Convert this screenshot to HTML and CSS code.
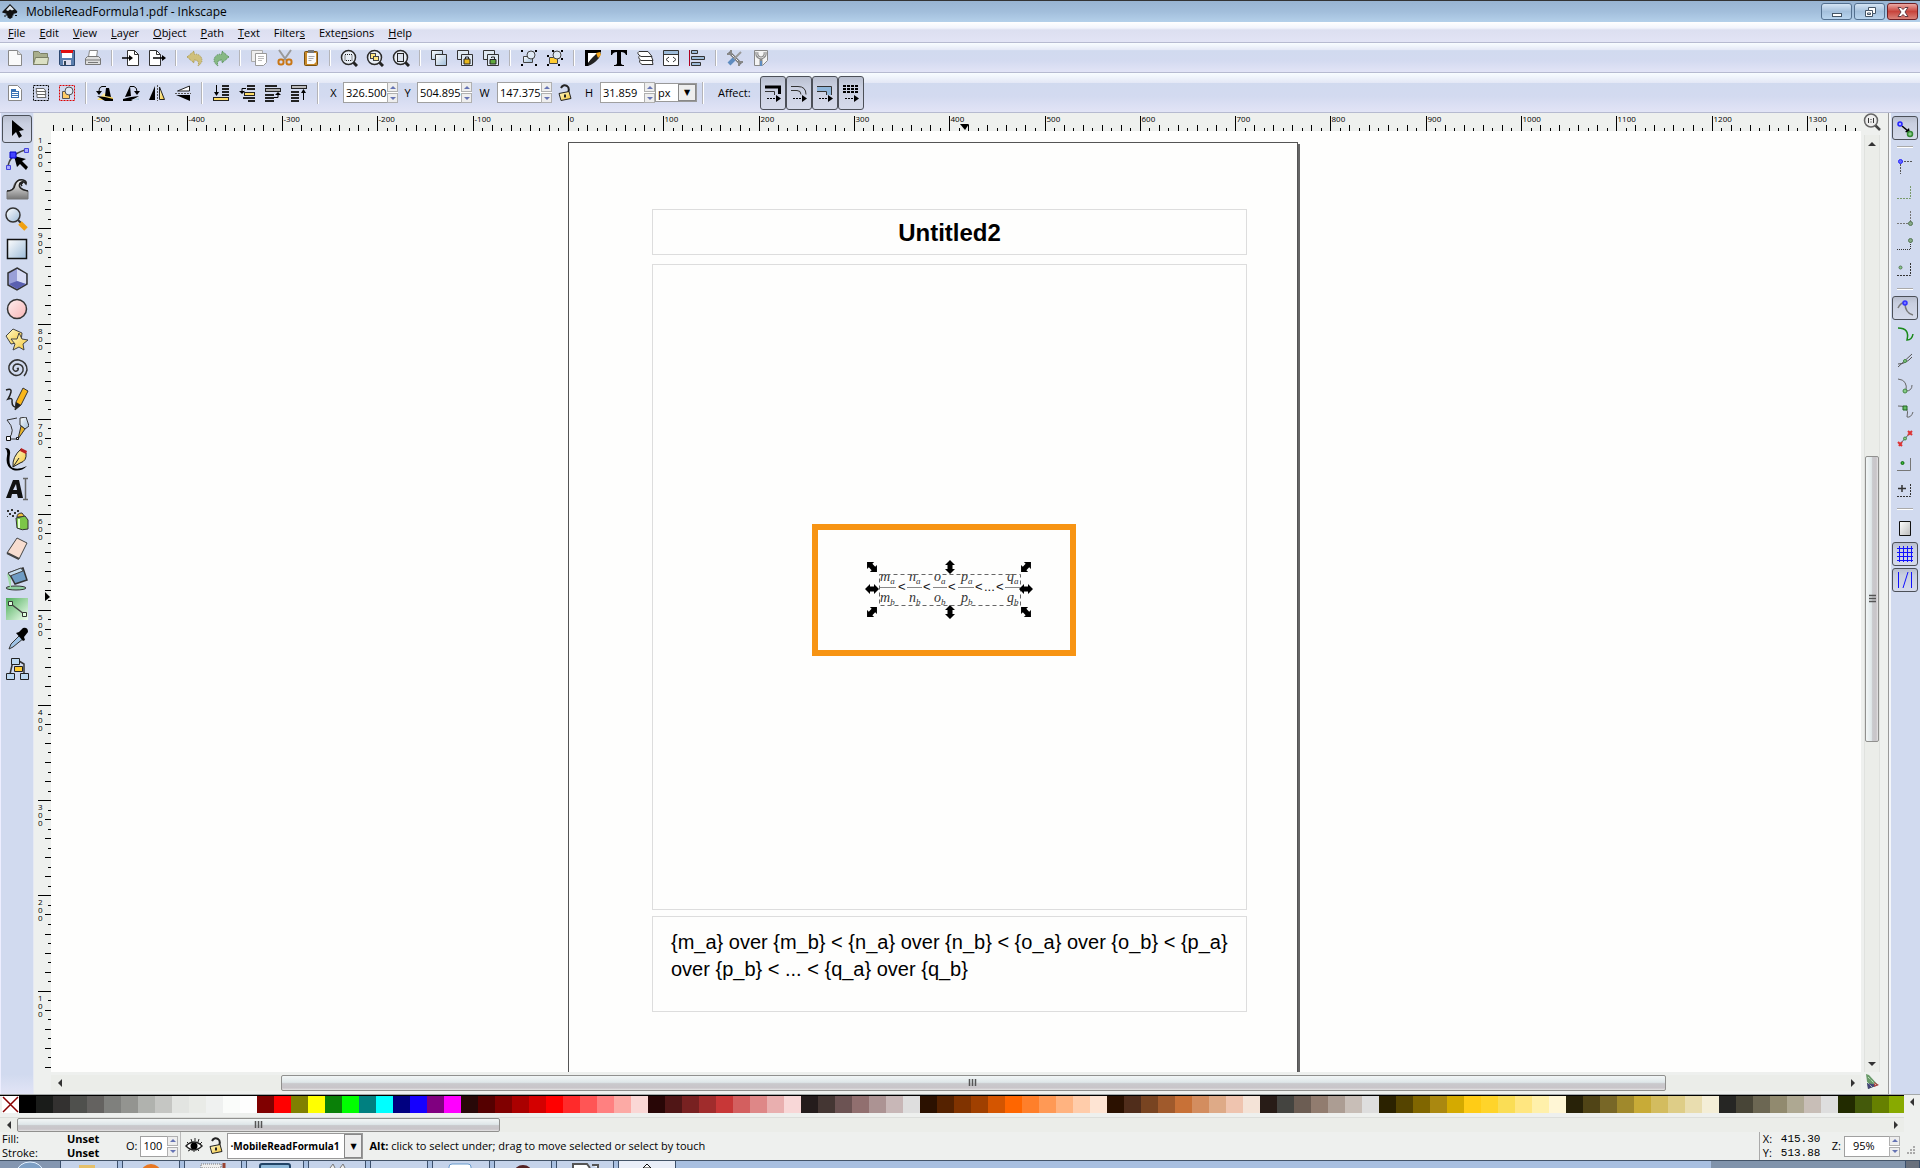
FILE: index.html
```html
<!DOCTYPE html>
<html lang="en">
<head>
<meta charset="utf-8">
<title>MobileReadFormula1.pdf - Inkscape</title>
<link rel="stylesheet" href="styles.css">
</head>
<body>
<svg width="0" height="0" class="defs" aria-hidden="true">
  <defs>
    <linearGradient id="blue" x2="1" y2="1"><stop stop-color="#fff"/><stop offset="1" stop-color="#9dbbd8"/></linearGradient>
    <linearGradient id="gold" x2="1" y2="1"><stop stop-color="#fffbd0"/><stop offset="1" stop-color="#f4c430"/></linearGradient>
    <linearGradient id="pink" x2="1" y2="1"><stop stop-color="#fff0f0"/><stop offset="1" stop-color="#f8b4b4"/></linearGradient>
    <linearGradient id="grey" x2="0" y2="1"><stop stop-color="#fff"/><stop offset="1" stop-color="#777"/></linearGradient>
    <linearGradient id="page" x2="1" y2="1"><stop stop-color="#fff"/><stop offset="1" stop-color="#bbb"/></linearGradient>
    <linearGradient id="green" x2="1" y2="1"><stop stop-color="#4fae5c"/><stop offset="1" stop-color="#f0fff0"/></linearGradient>
    <symbol id="lens" viewBox="0 0 18 18"><path d="M13 13l4 4" stroke="#222" stroke-width="3"/><circle cx="8.500" cy="8.500" r="7" fill="#e8eef6" stroke="#2a2a2a" stroke-width="1.500"/></symbol>
    <symbol id="lock" viewBox="0 0 16 18"><path d="M4 4q2-4 6-2 3 2 1 7" fill="none" stroke="#222" stroke-width="2"/><path d="M2 9.500l10-2 2 7-10 2z" fill="url(#gold)" stroke="#222"/><path d="M8 10.500v3" stroke="#222" stroke-width="2"/></symbol>
    <symbol id="grip" viewBox="0 0 10 8"><path d="M1.500 0v7M4.500 0v7M7.500 0v7" stroke="#555" stroke-width="1.500"/></symbol>
  </defs>
</svg>

<header class="titlebar">
  <svg class="logo" width="16" height="18" viewBox="0 0 16 18"><path d="M8 1l7 7q1 2-2 2.500l-2 .5 1 1-2 1 1 1-3 2-3-2 1-1-3-1 2-1-3-1Q-1 10 1 8z" fill="#111"/><path d="M8 2.500l4 4-2 1-2-1-2 1.500-2-1z" fill="#dde6ee"/><path d="M2 13h2M13 12.500h2" stroke="#111"/></svg>
  <h1>MobileReadFormula1.pdf - Inkscape</h1>
  <div class="winbtns">
    <button aria-label="Minimize"><svg width="14" height="12"><rect x="2.500" y="7.500" width="9" height="3" fill="#fff" stroke="#456"/></svg></button>
    <button aria-label="Restore"><svg width="14" height="12"><path d="M5.500 1.500h7v6h-3v3h-7v-6h3z" fill="#fff" stroke="#456"/><path d="M5.500 4.500h4v3M4.500 7h3v1.500h-3z" fill="none" stroke="#456"/></svg></button>
    <button class="close" aria-label="Close"><svg width="14" height="12"><path d="M2 1.500h3l2 2 2-2h3L9 6l3 4.500H9l-2-2-2 2H2L5 6z" fill="#fff" stroke="#643a42"/></svg></button>
  </div>
</header>

<nav class="menubar">
  <button><u>F</u>ile</button><button><u>E</u>dit</button><button><u>V</u>iew</button><button><u>L</u>ayer</button><button><u>O</u>bject</button><button><u>P</u>ath</button><button><u>T</u>ext</button><button>Filter<u>s</u></button><button>Exte<u>n</u>sions</button><button><u>H</u>elp</button>
</nav>

<div class="toolbar commands" role="toolbar" aria-label="Commands">
  <button aria-label="New"><svg viewBox="0 0 18 18"><path d="M2.500 1.500h9l4 4v11h-13z" fill="#fafafa" stroke="#888"/><path d="M11.500 1.500v4h4" fill="#ddd" stroke="#999"/></svg></button>
  <button aria-label="Open"><svg viewBox="0 0 18 18"><path d="M1.500 15.500v-13h5l2 2h7v11z" fill="#a8ae8c" stroke="#7b8066"/><path d="M1.500 15.500l2-7h13l-1 7z" fill="#dbe0c4" stroke="#7b8066"/></svg></button>
  <button aria-label="Save"><svg viewBox="0 0 18 18"><path d="M1.500 1.500h15v15h-14l-1-1z" fill="#5b7fae" stroke="#2c4770"/><path d="M4 2h10v7H4z" fill="#fff"/><path d="M3 1h12v3H3z" fill="#e01010"/><path d="M5 11h8v5H5z" fill="#dde"/><path d="M6 12h2v4H6z" fill="#345"/></svg></button>
  <button aria-label="Print"><svg viewBox="0 0 18 18"><path d="M4.500 8l1-6.500h8l-1 6.500" fill="#fff" stroke="#888"/><path d="M1.500 9.500l2-2h11l2 2v6h-15z" fill="#ddd" stroke="#777"/><path d="M2 11h14M4 13.500h10" stroke="#777"/></svg></button>
  <i class="sep"></i>
  <button aria-label="Import"><svg viewBox="0 0 18 18"><path d="M5.500 1.500h7l4 4v11h-11z" fill="#fff" stroke="#333"/><path d="M12.500 1.500v4h4" fill="none" stroke="#333"/><path d="M0 9h8" stroke="#000" stroke-width="1.500"/><path d="M7 6l4 3-4 3z"/></svg></button>
  <button aria-label="Export"><svg viewBox="0 0 18 18"><path d="M1.500 1.500h7l4 4v11h-11z" fill="#fff" stroke="#333"/><path d="M8.500 1.500v4h4" fill="none" stroke="#333"/><path d="M5 9h9" stroke="#000" stroke-width="1.500"/><path d="M14 6l4 3-4 3z"/></svg></button>
  <i class="sep"></i>
  <button aria-label="Undo"><svg viewBox="0 0 18 18"><path d="M1 8l7-6v3q8 0 8 7-1 3-4 5 2-6-4-6v3z" fill="#cfc07c" stroke="#a59345" stroke-dasharray="1 1"/></svg></button>
  <button aria-label="Redo"><svg viewBox="0 0 18 18"><path d="M17 8l-7-6v3q-8 0-8 7 1 3 4 5-2-6 4-6v3z" fill="#86b884" stroke="#4d8650" stroke-dasharray="1 1"/></svg></button>
  <i class="sep"></i>
  <button aria-label="Copy"><svg viewBox="0 0 18 18"><path d="M1.500 1.500h11v11h-11z" fill="#eee" stroke="#aaa"/><path d="M5.500 4.500h11v9l-3 3h-8z" fill="#fff" stroke="#999"/><path d="M8 7.500h6M8 9.500h6M8 11.500h4" stroke="#bbb"/></svg></button>
  <button aria-label="Cut"><svg viewBox="0 0 18 18"><path d="M3 1l7 10M15 1L8 11" stroke="#999" stroke-width="2"/><rect x="2.500" y="10.500" width="5" height="5" rx="2" fill="none" stroke="#c97614" stroke-width="2"/><rect x="10.500" y="10.500" width="5" height="5" rx="2" fill="none" stroke="#c97614" stroke-width="2"/></svg></button>
  <button aria-label="Paste"><svg viewBox="0 0 18 18"><rect x="2.500" y="2.500" width="13" height="14" rx="1" fill="#c98a2b" stroke="#77500f"/><path d="M5 4h9v9l-2 2H5z" fill="#fafafa"/><path d="M6 1h6v3H6z" fill="#777"/><path d="M6.500 7.500h6M6.500 9.500h5M6.500 11.500h3" stroke="#aaa"/></svg></button>
  <i class="sep"></i>
  <button aria-label="Zoom selection"><svg viewBox="0 0 18 18"><use href="#lens"/><rect x="5" y="5.500" width="7" height="6" fill="none" stroke="#222" stroke-dasharray="1 1"/></svg></button>
  <button aria-label="Zoom drawing"><svg viewBox="0 0 18 18"><use href="#lens"/><rect x="4.500" y="4.500" width="5" height="5" fill="#ffe680" stroke="#444"/><rect x="7.500" y="7.500" width="5" height="4" fill="#ffe680" stroke="#444"/></svg></button>
  <button aria-label="Zoom page"><svg viewBox="0 0 18 18"><use href="#lens"/><rect x="5.500" y="4.500" width="6" height="8" fill="#dde4ee" stroke="#222"/></svg></button>
  <i class="sep"></i>
  <button aria-label="Duplicate"><svg viewBox="0 0 18 18"><path d="M1.500 1.500h11v9h-11z" fill="url(#blue)" stroke="#333"/><path d="M5.500 5.500h11v11h-11z" fill="url(#blue)" stroke="#333"/></svg></button>
  <button aria-label="Clone"><svg viewBox="0 0 18 18"><path d="M1.500 1.500h11v9h-11z" fill="#dfe9f2" stroke="#333"/><path d="M5.500 5.500h11v11h-11z" fill="#dfe9f2" stroke="#333"/><path d="M8 10h6v5H8z" fill="#e8b81c" stroke="#222"/><path d="M9.500 10V8h3v2" fill="none" stroke="#222"/></svg></button>
  <button aria-label="Unlink clone"><svg viewBox="0 0 18 18"><path d="M1.500 1.500h11v9h-11z" fill="#dfe9f2" stroke="#333"/><path d="M5.500 5.500h11v11h-11z" fill="#dfe9f2" stroke="#333"/><path d="M8 10.500h6V15H8z" fill="#5fa83c" stroke="#222"/><path d="M9.500 9V8h3v2" fill="none" stroke="#222"/></svg></button>
  <i class="sep"></i>
  <button aria-label="Group"><svg viewBox="0 0 18 18"><path d="M3.500 7.500h9v6h-9z" fill="url(#blue)" stroke="#444"/><circle cx="11" cy="6" r="4" fill="#dfe9f4" stroke="#444"/><path d="M1 1h2v2H1zM15 1h2v2h-2zM1 15h2v2H1zM15 15h2v2h-2z"/></svg></button>
  <button aria-label="Ungroup"><svg viewBox="0 0 18 18"><path d="M3.500 8.500h8v6h-8z" fill="#fc3" stroke="#444"/><circle cx="11" cy="6" r="4" fill="#dfe9f4" stroke="#444"/><path d="M1 6h2v2H1zM6 1h2v2H6zM15 1h2v2h-2zM1 15h2v2H1zM12 15h2v2h-2zM15 9h2v2h-2z"/></svg></button>
  <i class="sep"></i>
  <button aria-label="Fill and stroke"><svg viewBox="0 0 18 18"><path d="M1 1h16v2L4 17H1z"/><path d="M4 4h9L4 14z" fill="#fff"/><path d="M4 17q0-6 9-12l4-1-2 5q-5 6-11 8z" fill="#222"/><path d="M12 4l4-1 1 3-3 3z" fill="#f4a71d"/></svg></button>
  <button aria-label="Text and font"><svg viewBox="0 0 18 18"><path d="M1 1h16v5h-1q-1-3-5-3v11q0 2 3 2v1H4v-1q3 0 3-2V3Q3 3 2 6H1z"/></svg></button>
  <button aria-label="Layers"><svg viewBox="0 0 18 18"><g fill="#fff" stroke="#333"><path d="M6 10.500h10l1 5H6q-4-2-2-5z"/><path d="M5 6.500h10l2 5H5q-4-3-1-5z"/><path d="M3 2.500h9l4 5H5q-5-3-2-5z"/></g></svg></button>
  <button aria-label="XML editor"><svg viewBox="0 0 18 18"><path d="M1.500 1.500h15v15h-15z" fill="#fff" stroke="#333"/><path d="M2 2h14v3H2z" fill="#9dbbd8"/><path d="M2 5.500h14M7 8l-3 2.500L7 13M11 8l3 2.500-3 2.500" fill="none" stroke="#333"/></svg></button>
  <button aria-label="Align"><svg viewBox="0 0 18 18"><path d="M1.500 1v16" stroke="#b00020"/><g fill="#9dbbd8" stroke="#333"><path d="M3.500 1.500h6v3h-6zM3.500 7.500h13v3h-13zM3.500 13.500h9v3h-9z"/></g></svg></button>
  <i class="sep"></i>
  <button aria-label="Preferences"><svg viewBox="0 0 18 18"><path d="M3 3l12 12" stroke="#777" stroke-width="3"/><path d="M4 4l10 10" stroke="#eee"/><path d="M15 3L8 10" stroke="#999" stroke-width="2"/><path d="M8 10l-5 5" stroke="#5f8cc0" stroke-width="4"/><path d="M5 1v4H1M13 17v-4h4" fill="none" stroke="#888" stroke-width="2"/></svg></button>
  <button aria-label="Document properties"><svg viewBox="0 0 18 18"><path d="M2.500 1.500h13v10l-5 5h-8z" fill="#f4f4f4" stroke="#888"/><path d="M5 3q-1 5 4 6 5-1 4-6M9 9v7" fill="none" stroke="#888" stroke-width="3"/><path d="M5 3q-1 5 4 6 5-1 4-6" fill="none" stroke="#ddd"/><path d="M9 12v5" stroke="#5f8cc0" stroke-width="2"/></svg></button>
</div>

<div class="toolbar controls" role="toolbar" aria-label="Tool controls">
  <button aria-label="Select all"><svg viewBox="0 0 18 18"><path d="M2.500 1.500h9l4 4v11h-13z" fill="#fff" stroke="#888"/><path d="M5 5h5v2h3v7H5z" fill="#3b73b5"/><path d="M6 8.500h6M6 10.500h6M6 12.500h6" stroke="#fff"/></svg></button>
  <button aria-label="Select all in layers"><svg viewBox="0 0 18 18"><rect x="1.500" y="1.500" width="15" height="15" fill="none" stroke="#000" stroke-dasharray="2 1"/><g fill="#fff" stroke="#666"><path d="M5 10.500h8l1 3H5z"/><path d="M4 7.500h9l1 3H5z"/><path d="M4 4.500h8l2 3H5z"/></g></svg></button>
  <button aria-label="Deselect"><svg viewBox="0 0 18 18"><rect x="1.500" y="1.500" width="15" height="15" fill="none" stroke="#d00" stroke-dasharray="2 1"/><path d="M4.500 7.500h7v7h-7z" fill="#fc6" stroke="#555"/><circle cx="11" cy="7" r="4" fill="#dfe9f4" stroke="#555"/></svg></button>
  <i class="sep"></i>
  <button aria-label="Rotate left"><svg viewBox="0 0 18 18"><path d="M8 9l9 5v2H1z" fill="url(#gold)"/><path d="M1 12l8 1 8 2v2H9z"/><path d="M10 4h3l2 9-6-1z"/><path d="M10 2.500H6Q3 3 3 8" fill="none" stroke="#000"/><path d="M0 7h6l-3 4z"/></svg></button>
  <button aria-label="Rotate right"><svg viewBox="0 0 18 18"><path d="M17 12l-8 1-8 2v2h8z"/><path d="M8 2L3 13l6-1z"/><path d="M9 16l8-3v3z" fill="url(#blue)"/><path d="M8 2.500h4q3 1 3 5" fill="none" stroke="#000"/><path d="M18 7h-6l3 4z"/></svg></button>
  <button aria-label="Flip horizontal"><svg viewBox="0 0 18 18"><path d="M7 2v14H1z"/><path d="M11.500 3v12.500h5z" fill="url(#gold)" stroke="#222"/><path d="M9.500 1v16" stroke="#555" stroke-dasharray="2 1"/></svg></button>
  <button aria-label="Flip vertical"><svg viewBox="0 0 18 18"><path d="M16 11v6L2 11z"/><path d="M15.500 2v5h-12z" fill="#fff" stroke="#222"/><path d="M1 9.500h16" stroke="#555" stroke-dasharray="2 1"/></svg></button>
  <i class="sep"></i>
  <button aria-label="Lower to bottom"><svg viewBox="0 0 18 18"><path d="M10 2h7M10 5h7M10 8h7M10 11h7" stroke="#222" stroke-width="2"/><rect x="1.500" y="13.500" width="15" height="3" fill="#fd6" stroke="#222"/><path d="M4.500 1v8" stroke="#000"/><path d="M2 8h5l-2.500 4z"/></svg></button>
  <button aria-label="Lower"><svg viewBox="0 0 18 18"><path d="M9 2h8M9 5h8M5 14h12M10 17h7" stroke="#222" stroke-width="2"/><rect x="6.500" y="8.500" width="10" height="3" fill="#fd6" stroke="#222"/><path d="M8 4.500H4v3" fill="none" stroke="#000"/><path d="M1 7h6l-3 3z"/></svg></button>
  <button aria-label="Raise"><svg viewBox="0 0 18 18"><path d="M1 2h12M1 11h9M1 14h9M1 17h9" stroke="#222" stroke-width="2"/><rect x="1.500" y="4.500" width="15" height="3" fill="#aaa" stroke="#222"/><path d="M10 13.500h4v-3" fill="none" stroke="#000"/><path d="M11 11h6l-3-3z"/></svg></button>
  <button aria-label="Raise to top"><svg viewBox="0 0 18 18"><path d="M1 8h8M1 11h8M1 14h8M1 17h8" stroke="#222" stroke-width="2"/><rect x="1.500" y="1.500" width="15" height="3" fill="#bbb" stroke="#222"/><path d="M13.500 8v8" stroke="#000"/><path d="M11 9h5l-2.500-4z"/></svg></button>
  <i class="sep"></i>
  <label for="fx">X</label>
  <span class="spin"><input id="fx" value="326.500"><span><button aria-label="Increase X"></button><button aria-label="Decrease X"></button></span></span>
  <label for="fy">Y</label>
  <span class="spin"><input id="fy" value="504.895"><span><button aria-label="Increase Y"></button><button aria-label="Decrease Y"></button></span></span>
  <label for="fw">W</label>
  <span class="spin"><input id="fw" value="147.375"><span><button aria-label="Increase width"></button><button aria-label="Decrease width"></button></span></span>
  <button aria-label="Lock ratio"><svg viewBox="0 0 16 18"><use href="#lock"/></svg></button>
  <label for="fh">H</label>
  <span class="spin"><input id="fh" value="31.859"><span><button aria-label="Increase height"></button><button aria-label="Decrease height"></button></span></span>
  <span class="combo unit"><select aria-label="Unit"><option>px</option></select></span>
  <i class="sep"></i>
  <span class="affect">Affect:</span>
  <div class="toggles">
    <button class="on" aria-label="Scale stroke width"><svg viewBox="0 0 18 18"><path d="M1 3h14.500v7" fill="none" stroke="#000" stroke-width="3"/><path d="M1 7.500h9.500V11" fill="none" stroke="#333"/><path d="M3 14.500h9" stroke="#000" stroke-dasharray="2 1"/><path d="M12 11l5 3.500-5 3.500z"/></svg></button>
    <button class="on" aria-label="Scale corners"><svg viewBox="0 0 18 18"><path d="M1 2.500h7q8 0 8 8M1 6.500h6q4 0 4 4" fill="none" stroke="#333"/><path d="M3 14.500h9" stroke="#000" stroke-dasharray="2 1"/><path d="M12 11l5 3.500-5 3.500z"/></svg></button>
    <button class="on" aria-label="Move gradients"><svg viewBox="0 0 18 18"><path d="M1 3h14v8h-4V7H1z" fill="#8fb6da"/><path d="M1 2.500h14.500V11M1 7.500h9.500V11" fill="none" stroke="#333"/><path d="M3 14.500h9" stroke="#000" stroke-dasharray="2 1"/><path d="M12 11l5 3.500-5 3.500z"/></svg></button>
    <button class="on" aria-label="Move patterns"><svg viewBox="0 0 18 18"><path d="M1 2h16M1 5h16M1 8h16" stroke="#000" stroke-width="2" stroke-dasharray="3 1"/><path d="M3 14.500h9" stroke="#000" stroke-dasharray="2 1"/><path d="M12 11l5 3.500-5 3.500z"/></svg></button>
  </div>
</div>

<main class="workspace">
  <div class="toolbox" role="toolbar" aria-label="Tools">
    <button class="on" aria-label="Selector"><svg viewBox="0 0 24 24"><path d="M7 3v16l4-4 3 6 3-2-3-5 5-1z"/></svg></button>
    <button aria-label="Node"><svg viewBox="0 0 24 24"><path d="M3 20Q4 8 20 3" fill="none" stroke="#444" stroke-width="1.500"/><path d="M9 9l3 11 3-3 6 6 2-3-6-6 4-2z"/><path d="M5 5h6v6H5z" fill="#44f" stroke="#00c"/><path d="M1.500 18.500h4v4h-4zM19.500 1.500h4v4h-4z" fill="#aaf" stroke="#44d"/></svg></button>
    <button aria-label="Tweak"><svg viewBox="0 0 24 24"><path d="M2 22v-8q6 0 7-6 2-6 9-5 4 1 3 4-3-4-6-1-2 6 8 8v8z" fill="url(#grey)" stroke="#777"/><path d="M2 14q7 0 8-6 2-6 8-5 4 1 3 4-3-4-6-1-3 6 8 8M17 9q-2-3 1-3" fill="none" stroke="#222" stroke-width="1.500"/></svg></button>
    <button aria-label="Zoom"><svg viewBox="0 0 24 24"><path d="M13 13l4 4" stroke="#333" stroke-width="2"/><path d="M15 16l6 6" stroke="#f0a010" stroke-width="5"/><circle cx="8" cy="8" r="7" fill="url(#blue)" stroke="#333" stroke-width="1.500"/></svg></button>
    <button aria-label="Rectangle"><svg viewBox="0 0 24 24"><path d="M2.500 2.500h19v19h-19z" fill="url(#blue)" stroke="#111" stroke-width="1.500"/></svg></button>
    <button aria-label="3D box"><svg viewBox="0 0 24 24"><path d="M12 1l10 6v10l-10 6-9-5V6z" fill="#9aa0d8" stroke="#333" stroke-width="1.500"/><path d="M12 2v12l9 3V7z" fill="#d8dcf4"/><path d="M4 17l8-3 9 3-9 5z" fill="#5a60b0"/></svg></button>
    <button aria-label="Ellipse"><svg viewBox="0 0 24 24"><circle cx="12" cy="12" r="9.500" fill="url(#pink)" stroke="#333" stroke-width="1.500"/></svg></button>
    <button aria-label="Star"><svg viewBox="0 0 24 24"><path d="M8 2l9 4-1 9-10 2-5-8z" fill="url(#gold)" stroke="#444"/><path d="M14 6l3 6 6 1-5 4 1 6-5-3-6 3 2-6-4-5h6z" fill="url(#gold)" stroke="#444"/></svg></button>
    <button aria-label="Spiral"><svg viewBox="0 0 24 24"><path d="M12 12q2-2 1 1-3 3-5-1 0-5 5-5 6 1 5 7-3 6-9 4-6-3-5-9 3-7 10-6 8 2 8 10-1 4-3 6" fill="none" stroke="#333" stroke-width="1.500"/></svg></button>
    <button aria-label="Pencil"><svg viewBox="0 0 24 24"><path d="M1 3q6-2 5 2t-3 7q5-2 4 3 0 6 6 5" fill="none" stroke="#222" stroke-width="1.500"/><path d="M18 1l5 3-7 14-6 5 1-8z" fill="#f9b61c" stroke="#333"/><path d="M11 15l5 3-6 5z" fill="#222"/></svg></button>
    <button aria-label="Bezier"><svg viewBox="0 0 24 24"><path d="M3 22h10M3 22Q12 14 2 3l10-2" fill="none" stroke="#333"/><path d="M15 1l6-1 3 9-4 3-5-4z" fill="url(#blue)" stroke="#333"/><path d="M16 9l4 3-7 10z" fill="#eab52c" stroke="#333"/><path d="M1.500 19.500h4v4h-4zM11.500 20.500h2v2h-2z" fill="#fff" stroke="#111"/></svg></button>
    <button aria-label="Calligraphy"><svg viewBox="0 0 24 24"><path d="M0 1q6 0 5 6-2 12 3 14 6 2 14-2-6 6-14 4Q0 20 2 9q1-6-2-8z"/><path d="M16 2l5 4q1 8-6 10l-7 4q-1-10 8-18z" fill="url(#gold)" stroke="#222"/><path d="M8 20l6-9" stroke="#222"/><path d="M16 1l6 3-1 3-6-3z" fill="#b22"/></svg></button>
    <button aria-label="Text"><svg viewBox="0 0 24 24"><path d="M1 21L8 3h6l4 18h-5l-1-4H7l-1 4zM8 13h4l-1-6z" fill="#111" fill-rule="evenodd"/><path d="M18 1.500h5M18 22.500h5M20.500 2v20" stroke="#666" stroke-width="1.500"/></svg></button>
    <button aria-label="Spray"><svg viewBox="0 0 24 24"><path d="M2 3h2v2H2zM6 2h2v2H6zM4 6h2v2H4zM9 5h2v2H9zM7 8h2v2H7zM2 9h1v1H2zM12 3h2v2h-2z" fill="#333"/><path d="M12 10q0-4 5-4l3 4z" fill="#f0c040" stroke="#333"/><path d="M11 11l9-2 3 4v9q-6 2-11-1z" fill="#7cc648" stroke="#333"/><path d="M14 12v9" stroke="#e4ffd0" stroke-width="2"/></svg></button>
    <button aria-label="Eraser"><svg viewBox="0 0 24 24"><path d="M12 1l10 5-8 16-12-6z" fill="#f8ddd0" stroke="#444"/><path d="M2 16l12 6" stroke="#444" stroke-width="2"/></svg></button>
    <button aria-label="Paint bucket"><svg viewBox="0 0 24 24"><ellipse cx="11" cy="21" rx="10" ry="2" fill="#8ed0a0" stroke="#333"/><path d="M2 7h4v14H5z" fill="#a0dca8"/><path d="M4 6l14-5 4 12-12 4z" fill="#6f9cc4" stroke="#333" stroke-width="1.500"/><path d="M3 6l13-5 2 3-13 5z" fill="#c8dff0" stroke="#444"/></svg></button>
    <button aria-label="Gradient"><svg viewBox="0 0 24 24"><path d="M1 1h22v22H1z" fill="url(#green)"/><path d="M6 7l13 10" stroke="#444" stroke-width="1.500"/><path d="M3.500 4.500h4v4h-4zM17.500 15.500h4v4h-4z" fill="#dfd" stroke="#333"/></svg></button>
    <button aria-label="Dropper"><svg viewBox="0 0 24 24"><path d="M15 8l4 3L8 20l-4 2 2-5z" fill="#9fc3e6" stroke="#333"/><path d="M11 6l3-1 4-4q5-1 5 4l-4 5 1 3-2 1z"/></svg></button>
    <button aria-label="Connector"><svg viewBox="0 0 24 24"><path d="M8 4L5 17M14 4l5 3v10" fill="none" stroke="#333" stroke-width="1.500"/><g fill="#bcd8f0" stroke="#222"><path d="M6.500 1.500h8v6h-8zM1.500 16.500h8v6h-8zM15.500 16.500h8v6h-8z"/><path d="M9.500 9.500h8v5h-8z" fill="#fc3"/></g></svg></button>
  </div>

  <div class="editor">
    <svg class="hruler" id="hruler" aria-label="Horizontal ruler"></svg>
    <button class="zoom11" aria-label="Sticky zoom"><svg width="18" height="18" viewBox="0 0 18 18"><path d="M12 12l5 5" stroke="#444" stroke-width="2.500"/><circle cx="8" cy="7.500" r="6.500" fill="#eee" stroke="#666" stroke-width="1.500"/><path d="M5.500 5v5M10.500 5v5M8 6v1M8 8.500v1" stroke="#333"/></svg></button>
    <svg class="vruler" id="vruler" aria-label="Vertical ruler"></svg>
    <div class="canvas">
      <article class="page">
        <h2 class="frame heading">Untitled2</h2>
        <div class="frame body-frame"></div>
        <p class="frame formula-source">{m_a} over {m_b} &lt; {n_a} over {n_b} &lt; {o_a} over {o_b} &lt; {p_a} over {p_b} &lt; ... &lt; {q_a} over {q_b}</p>
        <svg class="formula" viewBox="0 0 264 132">
          <defs>
            <path id="arrow" d="M0-7L5-2H2.500V2H5L0 7-5 2H-2.500V-2H-5z"/>
          </defs>
          <rect x="3" y="3" width="258" height="126" fill="none" stroke="#f79413" stroke-width="6"/>
          <g class="var">
            <text x="68" y="57">m<tspan dy="3" class="sub">a</tspan></text><text x="68" y="78">m<tspan dy="3" class="sub">b</tspan></text>
            <text x="97" y="57">n<tspan dy="3" class="sub">a</tspan></text><text x="97" y="78">n<tspan dy="3" class="sub">b</tspan></text>
            <text x="122" y="57">o<tspan dy="3" class="sub">a</tspan></text><text x="122" y="78">o<tspan dy="3" class="sub">b</tspan></text>
            <text x="149" y="57">p<tspan dy="3" class="sub">a</tspan></text><text x="149" y="78">p<tspan dy="3" class="sub">b</tspan></text>
            <text x="195" y="57">q<tspan dy="3" class="sub">a</tspan></text><text x="195" y="78">q<tspan dy="3" class="sub">b</tspan></text>
          </g>
          <g class="rel"><text x="86" y="67">&lt;</text><text x="111" y="67">&lt;</text><text x="136" y="67">&lt;</text><text x="163" y="67">&lt;</text><text x="172" y="67">...</text><text x="184" y="67">&lt;</text></g>
          <path d="M67 63.500h17M95 63.500h15M121 63.500h14M146 63.500h16M193 63.500h15" stroke="#888"/>
          <rect x="67.500" y="50.500" width="141" height="31" fill="none" stroke="#666" stroke-dasharray="4 3"/>
          <use href="#arrow" x="138" y="43"/><use href="#arrow" x="138" y="88"/>
          <use href="#arrow" transform="translate(60 65) rotate(90)"/><use href="#arrow" transform="translate(214 65) rotate(90)"/>
          <use href="#arrow" transform="translate(60 43) rotate(-45)"/><use href="#arrow" transform="translate(214 43) rotate(45)"/>
          <use href="#arrow" transform="translate(60 88) rotate(45)"/><use href="#arrow" transform="translate(214 88) rotate(-45)"/>
        </svg>
      </article>
    </div>
    <div class="scroll vertical">
      <button aria-label="Scroll up"><i class="tri up"></i></button>
      <i class="before"></i><div class="thumb"><svg width="10" height="8"><use href="#grip"/></svg></div><i class="after"></i>
      <button aria-label="Scroll down"><i class="tri down"></i></button>
    </div>
    <div class="scroll horizontal">
      <button aria-label="Scroll left"><i class="tri left"></i></button>
      <i class="before"></i><div class="thumb"><svg width="10" height="8"><use href="#grip"/></svg></div><i class="after"></i>
      <button aria-label="Scroll right"><i class="tri right"></i></button>
    </div>
    <button class="cms" aria-label="Color management"><svg width="16" height="16" viewBox="0 0 16 16"><path d="M2 0l3 1 9 10-10 4z" fill="#6a9a6a"/><path d="M3 9l11 2-10 4z" fill="#447"/><path d="M10 8l5 3-5 2z" fill="#a44"/><path d="M4 3l8 8M3 8l5 5" stroke="#dfd" stroke-dasharray="1 1"/></svg></button>
  </div>

  <div class="snapbar" role="toolbar" aria-label="Snap controls">
    <button class="on" aria-label="Enable snapping"><svg viewBox="0 0 20 20"><path d="M7 8l6 5" stroke="#000" stroke-width="1.500"/><path d="M15 15l-5-1 4-4z"/><circle cx="5" cy="6" r="2" fill="#aaf" stroke="#22f" stroke-width="1.500"/><circle cx="15" cy="16" r="2.500" fill="#8c8" stroke="#383" stroke-width="1.500"/></svg></button>
    <i class="hsep"></i>
    <button aria-label="Snap bounding box"><svg viewBox="0 0 20 20"><path d="M5.500 5v13M6 5.500h12" stroke="#555" stroke-dasharray="2 1"/><circle cx="5.500" cy="5.500" r="2" fill="#66f" stroke="#22f"/></svg></button>
    <button aria-label="Snap bounding box edges"><svg viewBox="0 0 20 20"><path d="M2 16.500h13.500V3" fill="none" stroke="#7a9a6a" stroke-dasharray="2 1"/></svg></button>
    <button aria-label="Snap bounding box corners"><svg viewBox="0 0 20 20"><path d="M2 15.500h13.500V2" fill="none" stroke="#777" stroke-dasharray="2 1"/><circle cx="15.500" cy="15.500" r="2" fill="#8a8" stroke="#575"/></svg></button>
    <button aria-label="Snap edge midpoints"><svg viewBox="0 0 20 20"><path d="M2 15.500h13.500V8" fill="none" stroke="#333" stroke-dasharray="1 1"/><circle cx="15.500" cy="6.500" r="2" fill="#8a8" stroke="#575"/></svg></button>
    <button aria-label="Snap box centers"><svg viewBox="0 0 20 20"><path d="M2 15.500h13.500V3" fill="none" stroke="#333" stroke-dasharray="2 1"/><circle cx="5.500" cy="7.500" r="1.500" fill="#8c8" stroke="#575"/></svg></button>
    <i class="hsep"></i>
    <button class="on" aria-label="Snap nodes"><svg viewBox="0 0 20 20"><path d="M3 10q3-6 7-5 0 10 8 12" fill="none" stroke="#777" stroke-width="1.500"/><circle cx="10" cy="5" r="2" fill="#77f" stroke="#33f" stroke-width="1.500"/></svg></button>
    <button aria-label="Snap to paths"><svg viewBox="0 0 20 20"><path d="M3 4q12 0 9 12 5 0 6-6" fill="none" stroke="#1a8a1a" stroke-width="1.500"/></svg></button>
    <button aria-label="Snap to intersections"><svg viewBox="0 0 20 20"><path d="M3 17L17 4M3 14q8 0 14-7" fill="none" stroke="#555"/><circle cx="10" cy="11" r="1.500" fill="#8c8" stroke="#484"/></svg></button>
    <button aria-label="Snap to cusp nodes"><svg viewBox="0 0 20 20"><path d="M3 3q10 1 8 12 6 0 6-6" fill="none" stroke="#666"/><circle cx="10" cy="15" r="2" fill="#8c8" stroke="#484"/></svg></button>
    <button aria-label="Snap to smooth nodes"><svg viewBox="0 0 20 20"><path d="M3 4q12-1 9 11 4 1 6-5" fill="none" stroke="#666"/><path d="M8 4h4v4H8z" fill="#6b6" stroke="#262"/></svg></button>
    <button aria-label="Snap line midpoints"><svg viewBox="0 0 20 20"><path d="M4 17L16 4" stroke="#555"/><path d="M3 14l4 4M7 14l-3 4M13 3l4 4M17 3l-4 4" stroke="#d33" stroke-width="2"/><circle cx="10" cy="10.500" r="1.500" fill="#8c8" stroke="#484"/></svg></button>
    <button aria-label="Snap object centers"><svg viewBox="0 0 20 20"><path d="M2 16.500h13.500V4" fill="none" stroke="#777"/><circle cx="7.500" cy="9" r="1.500" fill="#3b3" stroke="#161"/></svg></button>
    <button aria-label="Snap rotation centers"><svg viewBox="0 0 20 20"><path d="M2 16.500h13.500V3" fill="none" stroke="#333" stroke-dasharray="2 1"/><path d="M3 8.500h8M7 5v7" stroke="#333" stroke-width="1.500"/></svg></button>
    <i class="hsep"></i>
    <button aria-label="Snap to page border"><svg viewBox="0 0 20 20"><path d="M4.500 3.500h11v14h-11z" fill="url(#page)" stroke="#111"/></svg></button>
    <button class="on" aria-label="Snap to grid"><svg viewBox="0 0 20 20"><path d="M4.500 2v16M8.500 2v16M12.500 2v16M16.500 2v16M2 4.500h16M2 8.500h16M2 12.500h16M2 16.500h16" stroke="#11f"/></svg></button>
    <button class="on" aria-label="Snap to guides"><svg viewBox="0 0 20 20"><path d="M3.500 2v16M16.500 2v16M8 18l5-16" stroke="#11f"/></svg></button>
  </div>
</main>

<section class="palette" aria-label="Palette">
  <div class="swatches" id="swatches">
    <button class="none" aria-label="None"><svg width="17" height="17"><path d="M1 1l15 15M16 1L1 16" stroke="#800" stroke-width="1.500"/></svg></button>
  </div>
  <button class="palmenu" aria-label="Palette menu"><i class="tri left"></i></button>
  <div class="scroll horizontal pal">
    <button aria-label="Scroll left"><i class="tri left"></i></button>
    <div class="thumb"><svg width="10" height="8"><use href="#grip"/></svg></div><i class="after"></i>
    <button aria-label="Scroll right"><i class="tri right"></i></button>
  </div>
</section>

<footer class="status">
  <dl class="style"><dt>Fill:</dt><dd>Unset</dd><dt>Stroke:</dt><dd>Unset</dd></dl>
  <label for="fo">O:</label>
  <span class="spin opacity"><input id="fo" value="100"><span><button aria-label="Increase opacity"></button><button aria-label="Decrease opacity"></button></span></span>
  <i class="vline"></i>
  <button class="flat" aria-label="Toggle layer visibility"><svg width="18" height="18" viewBox="0 0 18 18"><path d="M1 9q8-8 16 0-8 8-16 0z" fill="#fff" stroke="#222" stroke-width="1.500"/><circle cx="9" cy="9" r="3.500"/><path d="M2 5l2 2M6 2l1 3M10 1v3M14 2l-1 3M17 5l-2 2M3 14l2-1M9 15v-1M14 14l-1-1" stroke="#222"/></svg></button>
  <button class="flat" aria-label="Lock layer"><svg width="16" height="18" viewBox="0 0 16 18"><use href="#lock"/></svg></button>
  <span class="combo layer"><select aria-label="Current layer"><option>·MobileReadFormula1</option></select></span>
  <p class="hint"><b>Alt:</b> click to select under; drag to move selected or select by touch</p>
  <dl class="coords"><dt>X:</dt><dd>415.30</dd><dt>Y:</dt><dd>513.88</dd></dl>
  <label for="fz">Z:</label>
  <span class="spin zoom"><input id="fz" value="95%"><span><button aria-label="Zoom in"></button><button aria-label="Zoom out"></button></span></span>
  <svg class="corner" width="10" height="10"><path d="M8 1h2M5 4h2M8 4h2M2 7h2M5 7h2M8 7h2" stroke="#aaa" stroke-width="2"/></svg>
</footer>

<div class="taskbar" aria-label="Taskbar">
  <button class="start" aria-label="Start"><svg width="28" height="7"><ellipse cx="14" cy="11" rx="13" ry="10" fill="#7d9fc4" stroke="#dfefff"/></svg></button>
  <button aria-label="Explorer"><svg width="28" height="7"><path d="M4 4h16v3H4z" fill="#e5c06a"/></svg></button>
  <button aria-label="Firefox"><svg width="28" height="7"><ellipse cx="14" cy="12" rx="10" ry="9" fill="#e87722"/></svg></button>
  <button aria-label="Notes"><svg width="28" height="7"><path d="M2 3h20v4H2z" fill="#eee" stroke="#777" stroke-dasharray="1 1"/><path d="M25 2v5" stroke="#943" stroke-width="3"/></svg></button>
  <button aria-label="Viewer"><svg width="32" height="7"><rect x="1" y="3" width="30" height="8" rx="2" fill="#8db8d8" stroke="#246" stroke-width="2"/></svg></button>
  <button aria-label="Tools"><svg width="28" height="7"><path d="M7 7l3-4 2 4M17 7l3-4 2 4" fill="#eee" stroke="#777"/></svg></button>
  <button aria-label="Folder"></button>
  <button aria-label="Writer"><svg width="28" height="7"><rect x="2" y="3" width="22" height="8" rx="3" fill="#fff" stroke="#69c"/></svg></button>
  <button aria-label="Browser"><svg width="28" height="7"><ellipse cx="14" cy="12" rx="9" ry="8" fill="#522"/></svg></button>
  <button aria-label="Document"><svg width="28" height="7"><path d="M2 7V3h14l3 4M21 4h6v3" fill="#fff" stroke="#555" stroke-width="2"/></svg></button>
  <button class="lit" aria-label="Inkscape"><svg width="28" height="7"><path d="M10 7l4-4 4 4z" fill="#fff" stroke="#111"/></svg></button>
  <div class="tray"></div>
  <button class="desktop" aria-label="Show desktop"></button>
</div>
<script src="app.js"></script>
</body>
</html>
```
FILE: styles.css
```css
* { box-sizing: border-box; }
body {
  margin: 0;
  height: 100vh;
  display: flex;
  flex-direction: column;
  overflow: hidden;
  background: #eef0ee;
  font: 11px/16px "Open Sans", "Noto Sans", sans-serif;
  color: #000;
}
button, input, select { font: inherit; color: inherit; border: 0; padding: 0; margin: 0; background: none; border-radius: 0; }
button { display: flex; align-items: center; justify-content: center; }
h1, h2, p, dl, dd { margin: 0; }
.defs { position: absolute; }

.titlebar {
  flex: none;
  height: 22px;
  display: flex;
  align-items: center;
  gap: 8px;
  padding-left: 2px;
  border-top: 1px solid #333;
  background: linear-gradient(#98b4d2, #a2bedb 50%, #b4d0ea);
}
.titlebar h1 { flex: 1; font-size: 12px; font-weight: 400; }
.winbtns { display: flex; gap: 2px; padding-right: 2px; }
.winbtns button { width: 31px; height: 17px; border: 1px solid #53708f; border-radius: 3px; background: linear-gradient(#d4e4f4, #a4c0dc 50%, #b8d4ee); }
.winbtns .close { border-color: #6e1f24; background: linear-gradient(#eba9a4, #c7443c 50%, #d9837a); }

.menubar {
  flex: none;
  height: 21px;
  display: flex;
  gap: 14px;
  padding: 1px 0 0 8px;
  border-bottom: 1px solid #b6bad0;
  background: linear-gradient(#fff, #f2f4fc 30%, #dcdff0 40%, #e2e4f5);
}

.toolbar {
  flex: none;
  display: flex;
  align-items: center;
  padding-left: 2px;
  border-bottom: 1px solid #b6bad0;
  background: linear-gradient(#f8fdff, #e4e8f6 25%, #d1daef 26%, #d3daf0 60%, #e2e4f6);
}
.commands { height: 30px; }
.controls { height: 40px; }
.toolbar > button { flex: none; width: 26px; height: 26px; }
.toolbar svg { width: 18px; height: 18px; }
.sep { flex: none; width: 2px; height: 16px; margin: 0 5px; background: #b4b4b8; border-right: 1px solid #fff; }
.controls .sep { height: 22px; }
.controls label { width: 19px; text-align: center; }
.toolbar label[for="fw"] { width: 25px; }
.toolbar label[for="fh"] { width: 22px; }

.spin { flex: none; display: flex; width: 55px; height: 21px; background: #fff; }
.spin input { flex: 1; min-width: 0; border: 1px solid #a0a0a0; border-right: 0; padding-left: 2px; }
.spin > span { display: flex; flex-direction: column; width: 11px; gap: 1px; }
.spin span button { flex: 1; border: 1px solid #b0b0b0; background: #eee; }
.spin span button::before { content: ""; border: 3px solid transparent; border-top: 0; border-bottom-color: #6674b4; }
.spin span button:last-child::before { border: 3px solid transparent; border-bottom: 0; border-top-color: #6674b4; }
.combo { flex: none; display: flex; position: relative; height: 19px; background: #fff; border: 1px solid #999; }
.combo select { flex: 1; min-width: 0; appearance: none; padding-left: 2px; outline: 0; }
.combo::after { content: "▼"; position: absolute; right: 0; top: 0; bottom: 0; width: 16px; display: flex; align-items: center; justify-content: center; border: 1px solid #888; background: #eee; font: 8px "DejaVu Sans", sans-serif; pointer-events: none; }
.unit { width: 42px; }
.affect { padding: 0 9px; }
.toggles { display: flex; }
.on { border: 1px solid #4c5058; border-radius: 3px; background: linear-gradient(#b9bfcf, #c9cfe0 30%, #d5daea); }
.toggles button { width: 26px; height: 34px; }

.workspace { flex: 1; min-height: 0; display: flex; border-bottom: 1px solid #a4a8a8; }
.toolbox { flex: none; width: 34px; display: flex; flex-direction: column; align-items: center; padding-top: 1px; background: linear-gradient(#d1daef, #d1daef 98%, #e2e4f6); border-right: 1px solid #e6e9f2; border-left: 1px solid #eef; }
.toolbox button { flex: none; width: 30px; height: 30px; }
.toolbox .on { height: 28px; margin: 1px 0; }
.toolbox svg { width: 24px; height: 24px; }

.editor { flex: 1; min-width: 0; display: grid; grid-template: 18px 1fr 22px / 17px 1fr 27px; }
.hruler { grid-column: 1 / 3; width: 100%; height: 18px; }
.vruler { width: 17px; height: 100%; }
.hruler text, .vruler text { font-size: 8px; }
.canvas { position: relative; overflow: hidden; background: #fefefd; }
.page { position: absolute; left: 517px; top: 11px; width: 730px; height: 1069px; border: 1px solid #555; box-shadow: 2px 2px 0 #666; }
.frame { position: absolute; left: 83px; width: 595px; border: 1px solid #ddd; }
.heading { top: 66px; height: 46px; text-align: center; font: bold 24px/46px "Liberation Sans", Arial, sans-serif; }
.body-frame { top: 121px; height: 646px; }
.formula-source { top: 773px; height: 96px; padding: 12px 18px; font: 20px/27px "Liberation Sans", Arial, sans-serif; }
.formula { position: absolute; left: 243px; top: 381px; width: 264px; height: 132px; }
.var { font: italic 14px "Liberation Serif", serif; fill: #333; }
.sub { font-size: 9px; }
.rel { font: 13px "Liberation Sans", sans-serif; fill: #111; }

.scroll { display: flex; }
.scroll button { flex: none; width: 17px; }
.scroll .thumb { display: flex; align-items: center; justify-content: center; border: 1px solid #90908e; border-radius: 2px; background: linear-gradient(#f2f6f6, #dfe7e9 45%, #c9c9cc 55%, #c9c5c9 85%, #e6e6e6); }
.vertical { flex-direction: column; margin: 4px 8px 0 3px; border: solid #e0e2df; border-width: 0 1px; background: #ebede9; }
.vertical button { width: auto; height: 17px; }
.vertical .before { flex: 305; }
.vertical .thumb { flex: 284; background: linear-gradient(90deg, #f2f6f6, #dfe7e9 45%, #c9c9cc 55%, #c9c5c9 85%, #e6e6e6); }
.vertical .after { flex: 314; }
.vertical .thumb svg { transform: rotate(90deg); }
.horizontal { grid-column: 2; height: 16px; margin-top: 3px; background: #ebede9; }
.horizontal .before { flex: 213; }
.horizontal .thumb { flex: 1385; }
.horizontal .after { flex: 178; }
.cms { height: 20px; padding-left: 3px; justify-content: flex-start; }
.zoom11 { padding-right: 6px; }
.tri { border: 4px solid transparent; }
.tri.up { border-top: 0; border-bottom-color: #333; }
.tri.down { border-bottom: 0; border-top-color: #333; }
.tri.left { border-left: 0; border-right-color: #333; }
.tri.right { border-right: 0; border-left-color: #333; }

.snapbar { flex: none; width: 32px; display: flex; flex-direction: column; align-items: center; padding-top: 2px; border-left: 1px solid #999; background: #d1daef; box-shadow: inset 2px 0 #f4f6fa; }
.snapbar button { flex: none; width: 26px; height: 24px; margin: 1px 0; }
.snapbar svg { width: 20px; height: 20px; }
.hsep { width: 16px; height: 2px; margin: 5px 0; background: #aaa; border-bottom: 1px solid #fff; }

.palette { flex: none; display: grid; grid-template-columns: 1fr 16px; row-gap: 4px; }
.swatches { display: flex; min-width: 0; overflow: hidden; height: 18px; padding-left: 2px; border-top: 1px solid #000; }
.swatches button { flex: none; width: 17px; height: 17px; }
.swatches .none { background: #fff; }
.palmenu { height: 14px; }
.pal { grid-column: 1; height: 15px; margin: 0; border-top: 1px solid #dcdedb; }
.pal .thumb { flex: 482; }
.pal .after { flex: 1388; }

.status { flex: none; height: 28px; display: flex; align-items: center; }
.style { width: 126px; padding-left: 2px; display: grid; grid-template-columns: 65px 1fr; line-height: 14px; }
.style dd { font-weight: 700; }
.status label { padding-right: 3px; }
.opacity { width: 38px; }
.vline { width: 1px; height: 28px; margin: 0 2px; background: #bbb; }
.flat { width: 22px; }
.layer { width: 136px; height: 26px; font-size: 10px; font-weight: 700; }
.hint { flex: 1; padding-left: 6px; }
.coords { display: grid; grid-template-columns: 18px 50px; padding-left: 3px; line-height: 14px; border-left: 1px solid #aaa; }
.coords dd { font: 11px/14px "Liberation Mono", "Courier New", monospace; }
.status label[for="fz"] { padding-left: 1px; }
.zoom { width: 56px; }
.zoom input { padding-left: 8px; }
.corner { align-self: flex-end; margin: 4px 5px; }

.taskbar { flex: none; height: 8px; display: flex; overflow: hidden; background: #a8bfe0; border-top: 1px solid #445468; }
.taskbar button { flex: none; width: 58px; height: 7px; margin-right: 4px; border: solid #3b4f6b; border-width: 0 1px; background: #c5d3ea; }
.taskbar .lit { background: #e9eef8; }
.taskbar .start { border: 0; margin: 0; width: 60px; background: #8496b0; }
.tray { width: 194px; margin-left: auto; background: #8093ab; }
.taskbar .desktop { width: 15px; margin: 0; background: #69707c; }
```
FILE: app.js
```js
const NS = "http://www.w3.org/2000/svg";
const SCALE = 0.953;

function add(parent, tag, attrs, text) {
  const el = document.createElementNS(NS, tag);
  for (const key in attrs) el.setAttribute(key, attrs[key]);
  if (text !== undefined) el.textContent = text;
  parent.append(el);
}

function tickLength(unit, major) {
  if (unit % 100 === 0) return major;
  return unit % 20 === 0 ? 6 : 3;
}

// Horizontal ruler: the page origin is 534px from the ruler's left edge.
const h = document.getElementById("hruler");
const width = h.getBoundingClientRect().width;
let ticks = "";
for (let unit = -540; 534 + unit * SCALE < width; unit += 10) {
  const x = Math.round(534 + unit * SCALE) + 0.5;
  ticks += `M${x} 18v-${tickLength(unit, 15)}`;
  if (unit % 100 === 0 && x + 24 < width) add(h, "text", { x: x + 1, y: 9 }, unit);
}
add(h, "path", { d: ticks, stroke: "#000" });
add(h, "path", { d: "M926 11h9l-4 6z" });

// Vertical ruler: units grow upwards, digits are stacked.
const v = document.getElementById("vruler");
const height = v.getBoundingClientRect().height;
const yOf = (unit) => Math.round((1000 - unit) * SCALE + 2);
ticks = "";
for (let unit = 990; yOf(unit) < height; unit -= 10) {
  ticks += `M17 ${yOf(unit) + 0.5}h-${tickLength(unit, 13)}`;
}
for (let unit = 1000; yOf(unit) + 36 < height; unit -= 100) {
  [...String(unit)].forEach((digit, i) => add(v, "text", { x: 4, y: yOf(unit) + 10 + i * 8 }, digit));
}
add(v, "path", { d: ticks, stroke: "#000" });
add(v, "path", { d: "M11 461v9l5-4z" });

const COLORS = `000 1a1c1a 333130 4f504d 646260 7f807d 939490 b0b2ae c5c6c3 e2e4e1 e9ebe7 eff1f0 fafcfa fefefe
800000 ff0000 808000 ffff00 0a8008 00ff00 008080 00ffff 000080 1500ff 800080 ff00ff
280808 550000 800000 aa0000 d40000 ff0000 ff2a2a ff5555 ff8080 fcaaa5 fad7d5
280606 501616 782121 a02c2c c83737 d35f5f de8787 e9afaf f8d7d7
241c1c 443633 6c5353 916f6f ac9393 c8b7b7 dedede
2b1100 552200 803300 a04000 d45500 ff6600 ff7f2a ff9955 ffb380 ffccaa fee4d3
2b1100 502d1b 784421 a05a2c c87137 d38d5f deaa87 efc4af f4e3d7
281c17 444440 6c5d53 917c6f ac9d93 c8beb7 dedede
2b2200 554400 806600 aa8810 d4aa00 ffcc16 ffd42a fadd55 ffe680 fff0aa fff6d5
282208 504416 786727 a0892c c8ab37 d3bc5f decd87 e9ddaf f4eed7
262624 484537 6c6753 918a6f aea892 c8beb7 dedede
222b00 445a0b 668000 88aa00`.split(/\s+/);
const swatches = document.getElementById("swatches");
for (const color of COLORS) {
  const b = document.createElement("button");
  b.style.background = "#" + color;
  b.setAttribute("aria-label", "#" + color);
  swatches.append(b);
}
```
